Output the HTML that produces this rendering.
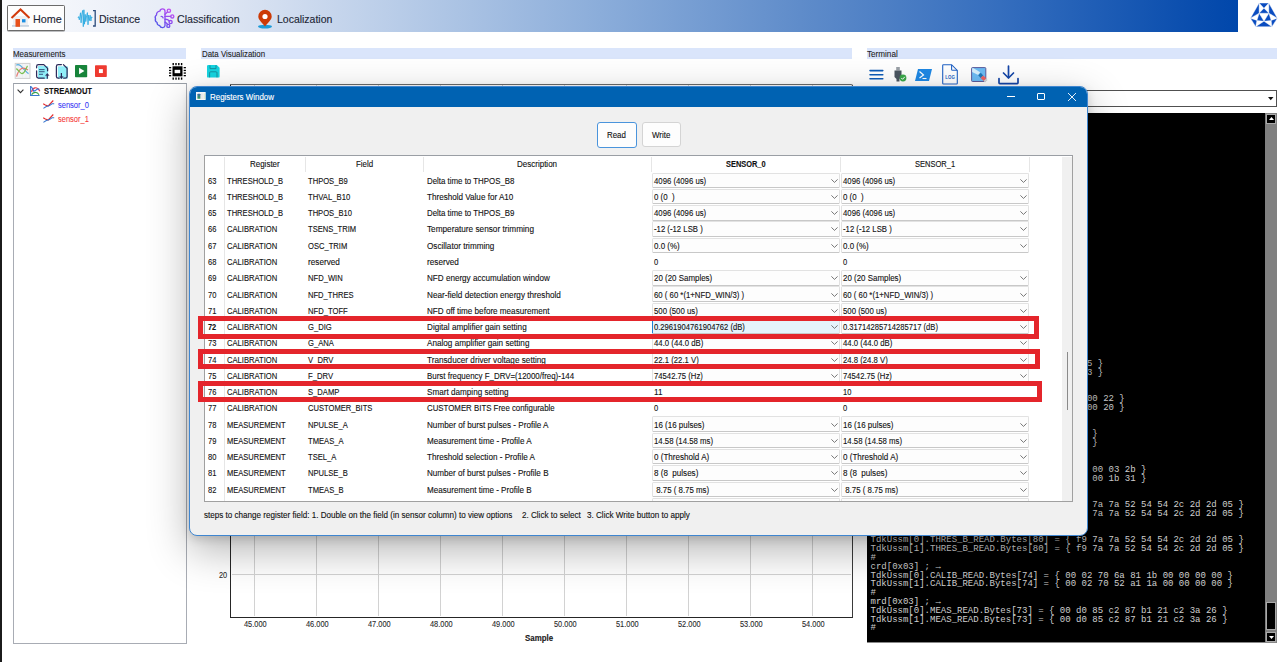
<!DOCTYPE html><html><head><meta charset="utf-8"><title>Registers Window</title><style>
*{margin:0;padding:0;box-sizing:border-box}
html,body{width:1280px;height:662px;overflow:hidden;background:#fff;font-family:"Liberation Sans",sans-serif;color:#1a1a1a}
.ab{position:absolute}
.t{position:absolute;white-space:pre;line-height:1}
svg{position:absolute;overflow:visible}
</style></head><body>
<div class="ab" style="left:0;top:0;width:1238px;height:32px;background:linear-gradient(90deg,#fbfcfe 0px,#e3e9f5 200px,#b8cce8 400px,#8badda 600px,#5f8cca 800px,#356ebe 1000px,#084cad 1200px,#0047ab 1238px)"></div>
<svg style="left:1246px;top:0px" width="34" height="30" viewBox="0 0 750 662">
<g fill="#0a4cc0" stroke="#fff" stroke-width="9" stroke-linejoin="round">
<polygon points="290,68 502,68 396,180"/>
<polygon points="396,180 290,292 505,292"/>
<polygon points="290,68 98,400 290,292"/>
<polygon points="502,68 692,400 505,292"/>
<polygon points="290,292 397,468 240,450"/>
<polygon points="505,292 397,468 556,450"/>
<polygon points="98,400 240,450 214,588"/>
<polygon points="692,400 556,450 572,588"/>
<polygon points="397,468 214,588 572,588"/>
</g></svg>
<div class="ab" style="left:7.3px;top:5px;width:57.4px;height:26.4px;border:1.3px solid #6b6b6b;border-radius:1.5px;background:#fdfdfd;box-shadow:0 0.6px 0 #888"></div>
<svg style="left:10px;top:8px" width="21" height="20" viewBox="0 0 21 20">
<rect x="3" y="8" width="15" height="10.5" fill="#eef0f3"/>
<rect x="2" y="17" width="17" height="1.8" fill="#c9d5e2"/>
<polyline points="1.5,10 10.5,1.5 19.5,10" fill="none" stroke="#d23a0c" stroke-width="2"/>
<rect x="5.5" y="11" width="4.5" height="7.8" fill="#e8501a"/>
<rect x="12" y="11.2" width="3.5" height="3.2" fill="#1b8fe3"/>
</svg>
<div class="t" style="left:33.00px;top:14.13px;font-size:10.6px;color:#1c2636;transform:scaleX(1.0165);transform-origin:0 0;-webkit-text-stroke:0.12px #1c2636;">Home</div>
<svg style="left:0;top:0" width="1" height="1">
<polyline points="78,18 78.7,16.6 79.3,19.8 79.9,16.8 80.5,12.8 81.1,22.8 81.7,14.8 82.7,10.4 83.3,26.7 83.9,9.8 84.5,24.2 85.2,14.4 85.8,21.6 86.6,15.8 87.4,12.6 88,24.8 88.7,15 89.4,20.6 90.2,15.2 90.9,21 91.6,16.8 92.2,18" fill="none" stroke="#28a9e0" stroke-width="0.85" stroke-linejoin="round"/>
<polyline points="93,10.6 95.2,10.6 95.2,26 93,26" fill="none" stroke="#2c4c7c" stroke-width="1.3"/>
</svg>
<div class="t" style="left:99.40px;top:13.93px;font-size:10.6px;color:#1c2636;transform:scaleX(0.9965);transform-origin:0 0;-webkit-text-stroke:0.12px #1c2636;">Distance</div>
<svg style="left:152px;top:6px" width="26" height="26" viewBox="0 0 26 26">
<defs><linearGradient id="bg1" gradientUnits="userSpaceOnUse" x1="4" y1="22" x2="20" y2="4"><stop offset="0" stop-color="#3d55e6"/><stop offset="0.55" stop-color="#8a4cf0"/><stop offset="1" stop-color="#c94ef2"/></linearGradient></defs>
<g fill="none" stroke="url(#bg1)" stroke-width="1.35" stroke-linecap="round" stroke-linejoin="round">
<path d="M13,19.6 V5.2 C13,3.6 11.9,2.9 10.6,2.9 C9.1,2.9 8.1,3.8 7.9,5.1 C5.7,5.3 4.3,7 4.5,9 C3.3,9.8 2.9,11.4 3.5,12.8 C3,14.4 3.7,15.9 5.1,16.5 C5,18.2 6.1,19.5 7.6,19.5 C8.1,20.9 9.4,21.7 10.9,21.6 C12.3,21.4 13,20.6 13,19.6"/>
<path d="M9.2,10.4 C10.2,10.4 10.9,11 11.1,11.8"/>
<path d="M13,8.3 L15.2,6.3"/><path d="M13,10.4 H18.7"/><path d="M13,13.3 C15,13.2 16.5,14 17.3,15"/><path d="M13,16.2 C14.2,16.8 15.2,17.6 15.7,18.6"/>
<circle cx="16.9" cy="4.7" r="1.65"/><circle cx="20.3" cy="10.4" r="1.55"/><circle cx="18.6" cy="16" r="1.55"/><circle cx="16.3" cy="19.9" r="1.5"/>
</g>
</svg>
<div class="t" style="left:176.70px;top:14.03px;font-size:10.6px;color:#1c2636;transform:scaleX(1.0041);transform-origin:0 0;-webkit-text-stroke:0.12px #1c2636;">Classification</div>
<svg style="left:256.6px;top:9.5px" width="16" height="19" viewBox="0 0 16 19">
<ellipse cx="8" cy="16.6" rx="7" ry="1.9" fill="#1d9bd8"/>
<path d="M8,16.4 C5,12.5 1.3,9.8 1.3,6.5 A6.7,6.7 0 0 1 14.7,6.5 C14.7,9.8 11,12.5 8,16.4 Z" fill="#cc3a06"/>
<circle cx="8" cy="6.5" r="2.6" fill="#fff"/>
</svg>
<div class="t" style="left:276.90px;top:14.03px;font-size:10.6px;color:#1c2636;transform:scaleX(0.9885);transform-origin:0 0;-webkit-text-stroke:0.12px #1c2636;">Localization</div>
<div class="ab" style="left:12.7px;top:48px;width:173.3px;height:10.8px;background:#dae5fb"></div>
<div class="t" style="left:13.10px;top:49.62px;font-size:8.6px;color:#1e1e1e;transform:scaleX(0.9208);transform-origin:0 0;-webkit-text-stroke:0.1px #1e1e1e;">Measurements</div>
<div class="ab" style="left:201.3px;top:48px;width:651px;height:10.8px;background:#dae5fb"></div>
<div class="t" style="left:201.70px;top:49.62px;font-size:8.6px;color:#1e1e1e;transform:scaleX(0.9194);transform-origin:0 0;-webkit-text-stroke:0.1px #1e1e1e;">Data Visualization</div>
<div class="ab" style="left:866.6px;top:48px;width:410.4px;height:10.8px;background:#dae5fb"></div>
<div class="t" style="left:867.00px;top:49.62px;font-size:8.6px;color:#1e1e1e;transform:scaleX(0.9455);transform-origin:0 0;-webkit-text-stroke:0.1px #1e1e1e;">Terminal</div>
<svg style="left:12px;top:60px" width="60" height="22" viewBox="0 0 60 22">
<rect x="3.2" y="3.4" width="14.8" height="15" fill="#f3f4f5" stroke="#cfcfcf" stroke-width="1"/>
<g stroke="#e6eaef" stroke-width="0.5"><line x1="7" y1="4" x2="7" y2="18"/><line x1="10.5" y1="4" x2="10.5" y2="18"/><line x1="14" y1="4" x2="14" y2="18"/></g>
<path d="M4.3,5.3 C6,4 8,4.5 11,8.3 C13.5,11 15,13 16.6,13.6" fill="none" stroke="#5aaee0" stroke-width="1.2"/>
<path d="M4.6,16.6 C5.5,13 7,10 9.6,8.5 C11.5,7.8 13.5,8.2 16,10" fill="none" stroke="#e47a72" stroke-width="1.2"/>
<path d="M4.3,8.6 C6,9.5 7,12 9.5,13.5 C11.5,14 12.5,12 13.5,10 C14.5,8 15,6.5 15.6,6" fill="none" stroke="#7cc052" stroke-width="1.2"/>
<rect x="26" y="6" width="10" height="12.6" fill="#90eef8"/>
<rect x="26.6" y="6.3" width="9.6" height="12.4" fill="#90eef8"/>
<g fill="none" stroke="#2e2c5a" stroke-width="1.25" stroke-linecap="round" stroke-linejoin="round">
<path d="M4.6,7.8 V6.5 Q4.6,4.6 6.5,4.6 H11.6 L15.6,8.6 V10.6" transform="translate(28,0)" opacity="0"/>
</g>
</svg>
<svg style="left:32px;top:60px" width="40" height="22" viewBox="0 0 40 22">
<rect x="6" y="6" width="10" height="12.6" fill="#90eef8"/>
<rect x="25.9" y="6.3" width="10" height="12.3" fill="#90eef8"/>
<g fill="none" stroke="#2e2c5a" stroke-width="1.25" stroke-linecap="round" stroke-linejoin="round">
<path d="M4.6,7.8 V6.4 Q4.6,4.6 6.4,4.6 H11.8 L15.6,8.4 V10.8"/>
<path d="M4.6,10.8 V16.3 Q4.6,18 6.4,18 H12.3"/>
<path d="M29.4,4.6 H26.2 Q24.4,4.6 24.4,6.4 V16.4 Q24.4,18.1 26.2,18.1 H27.3"/>
<path d="M31.4,4.6 L35.1,8.3 V16.4 Q35.1,18.1 33.3,18.1 H31.6"/>
</g>
<g stroke="#3b5f86" stroke-width="1.1"><line x1="7" y1="9.6" x2="12.6" y2="9.6"/><line x1="7" y1="11.7" x2="12.6" y2="11.7"/><line x1="7" y1="14.3" x2="11" y2="14.3"/></g>
<g fill="#2e2c5a" stroke="#2e2c5a">
<line x1="15.3" y1="14.5" x2="15.3" y2="18.8" stroke-width="1.2"/><polygon points="13.4,15.6 15.3,13.3 17.2,15.6" stroke-width="0.3"/>
<line x1="29.4" y1="13" x2="29.4" y2="17.2" stroke-width="1.2"/><polygon points="27.5,16.6 31.3,16.6 29.4,18.9" stroke-width="0.3"/>
</g>
</svg>
<svg style="left:75.4px;top:65px" width="12.2" height="12.2" viewBox="0 0 12 12">
<rect x="0" y="0" width="12" height="12" rx="0.8" fill="#17843a"/>
<polygon points="4,2.8 9.3,6 4,9.2" fill="#fff"/>
</svg>
<svg style="left:95.2px;top:65px" width="11.8" height="12.2" viewBox="0 0 12 12">
<rect x="0" y="0" width="12" height="12" rx="0.8" fill="#ee3a30"/>
<rect x="4" y="4" width="4" height="4" fill="#fff"/>
</svg>
<svg style="left:168.5px;top:62.8px" width="17" height="17" viewBox="0 0 17 17">
<rect x="3.5" y="3.3" width="10" height="10" fill="#000"/>
<rect x="5.6" y="6.8" width="5.6" height="3.4" fill="#fff"/>
<g fill="#000">
<rect x="3.5" y="0" width="1.4" height="2.2"/><rect x="6.3" y="0" width="1.4" height="2.2"/><rect x="9.1" y="0" width="1.4" height="2.2"/><rect x="11.9" y="0" width="1.4" height="2.2"/>
<rect x="3.5" y="14.5" width="1.4" height="2.2"/><rect x="6.3" y="14.5" width="1.4" height="2.2"/><rect x="9.1" y="14.5" width="1.4" height="2.2"/><rect x="11.9" y="14.5" width="1.4" height="2.2"/>
<rect x="0" y="4" width="2.2" height="1.3"/><rect x="0" y="6.8" width="2.2" height="1.3"/><rect x="0" y="9.4" width="2.2" height="1.3"/><rect x="0" y="12" width="2.2" height="1.3"/>
<rect x="14.7" y="4" width="2.2" height="1.3"/><rect x="14.7" y="6.8" width="2.2" height="1.3"/><rect x="14.7" y="9.4" width="2.2" height="1.3"/><rect x="14.7" y="12" width="2.2" height="1.3"/>
</g></svg>
<svg style="left:207.3px;top:65px" width="12.6" height="12.6" viewBox="0 0 12.6 12.6">
<path d="M1.2,0 H9.8 L12.6,2.8 V11.4 A1.2,1.2 0 0 1 11.4,12.6 H1.2 A1.2,1.2 0 0 1 0,11.4 V1.2 A1.2,1.2 0 0 1 1.2,0 Z" fill="#15d4e0"/>
<path d="M3,0.3 V3.6 H9 V0.3" fill="none" stroke="#158a9a" stroke-width="0.9"/>
<path d="M2.6,12.4 V7.8 A1,1 0 0 1 3.6,6.8 H9 A1,1 0 0 1 10,7.8 V12.4" fill="none" stroke="#158a9a" stroke-width="0.9"/>
</svg>
<div class="ab" style="left:13.2px;top:83.4px;width:173.6px;height:560.2px;border:1px solid #a8acb4;border-top-color:#9aa0a8;background:#fff"></div>
<svg style="left:16.8px;top:88.5px" width="7" height="4.5" viewBox="0 0 7 4.5"><polyline points="0.6,0.6 3.5,3.6 6.4,0.6" fill="none" stroke="#333" stroke-width="1.1"/></svg>
<svg style="left:29.7px;top:86px" width="11" height="10.5" viewBox="0 0 11 10.5">
<path d="M0.6,0 V9.5 H9.6" fill="none" stroke="#3a78cc" stroke-width="1.1"/>
<path d="M0.6,0.3 L2.8,2.7" stroke="#3a78cc" stroke-width="1.1"/>
<path d="M1.5,5.8 C2.6,1.8 6.6,-0.6 9.9,5.2" fill="none" stroke="#e8404a" stroke-width="1.2"/>
<path d="M2.2,2.3 L3.8,5.2 L5.7,4.15 L7.9,2.8 L9.3,3.3" fill="none" stroke="#2f6ee0" stroke-width="1.1"/>
<path d="M1.6,8.8 C3,6.2 7,5 9,8.8" fill="none" stroke="#3aa04a" stroke-width="1.1"/>
</svg>
<div class="t" style="left:44.10px;top:86.97px;font-size:8.9px;font-weight:bold;color:#111;transform:scaleX(0.8539);transform-origin:0 0;-webkit-text-stroke:0.12px #111;">STREAMOUT</div>
<svg style="left:42.7px;top:99.7px" width="11.5" height="9" viewBox="0 0 11.5 9">
<polyline points="0.2,3.7 2.3,4.9 5.1,6.1 7.5,3.3 10.3,0.5" fill="none" stroke="#e62828" stroke-width="1.1"/>
<polyline points="0.4,8.4 3.3,6.5 6.5,5.6 8.9,3.7 11.2,3.7" fill="none" stroke="#3a78d0" stroke-width="1.1"/>
</svg>
<div class="t" style="left:57.70px;top:100.65px;font-size:8.8px;color:#3838f5;transform:scaleX(0.8535);transform-origin:0 0;-webkit-text-stroke:0.08px #3838f5;">sensor_0</div>
<svg style="left:42.7px;top:113.60000000000001px" width="11.5" height="9" viewBox="0 0 11.5 9">
<polyline points="0.2,3.7 2.3,4.9 5.1,6.1 7.5,3.3 10.3,0.5" fill="none" stroke="#e62828" stroke-width="1.1"/>
<polyline points="0.4,8.4 3.3,6.5 6.5,5.6 8.9,3.7 11.2,3.7" fill="none" stroke="#3a78d0" stroke-width="1.1"/>
</svg>
<div class="t" style="left:57.70px;top:114.55px;font-size:8.8px;color:#f53838;transform:scaleX(0.8535);transform-origin:0 0;-webkit-text-stroke:0.08px #f53838;">sensor_1</div>
<div class="ab" style="left:230.4px;top:83.6px;width:622.2px;height:534px;border-left:1.7px solid #262626;border-bottom:1.7px solid #262626;border-top:1.6px solid #6c6c6c;border-right:1.4px solid #3a3a3a;border-top-right-radius:2px;background:#fff"></div>
<div class="ab" style="left:254.40px;top:85px;width:1px;height:531px;background:#d2d2d2"></div>
<div class="t" style="left:243.56px;top:620.02px;font-size:8.6px;color:#2a2a2a;transform:scaleX(0.8624);transform-origin:0 0;-webkit-text-stroke:0.1px #2a2a2a;">45.000</div>
<div class="ab" style="left:316.40px;top:85px;width:1px;height:531px;background:#d2d2d2"></div>
<div class="t" style="left:305.56px;top:620.02px;font-size:8.6px;color:#2a2a2a;transform:scaleX(0.8624);transform-origin:0 0;-webkit-text-stroke:0.1px #2a2a2a;">46.000</div>
<div class="ab" style="left:378.40px;top:85px;width:1px;height:531px;background:#d2d2d2"></div>
<div class="t" style="left:367.56px;top:620.02px;font-size:8.6px;color:#2a2a2a;transform:scaleX(0.8624);transform-origin:0 0;-webkit-text-stroke:0.1px #2a2a2a;">47.000</div>
<div class="ab" style="left:440.40px;top:85px;width:1px;height:531px;background:#d2d2d2"></div>
<div class="t" style="left:429.56px;top:620.02px;font-size:8.6px;color:#2a2a2a;transform:scaleX(0.8624);transform-origin:0 0;-webkit-text-stroke:0.1px #2a2a2a;">48.000</div>
<div class="ab" style="left:502.40px;top:85px;width:1px;height:531px;background:#d2d2d2"></div>
<div class="t" style="left:491.56px;top:620.02px;font-size:8.6px;color:#2a2a2a;transform:scaleX(0.8624);transform-origin:0 0;-webkit-text-stroke:0.1px #2a2a2a;">49.000</div>
<div class="ab" style="left:564.40px;top:85px;width:1px;height:531px;background:#d2d2d2"></div>
<div class="t" style="left:553.56px;top:620.02px;font-size:8.6px;color:#2a2a2a;transform:scaleX(0.8624);transform-origin:0 0;-webkit-text-stroke:0.1px #2a2a2a;">50.000</div>
<div class="ab" style="left:626.40px;top:85px;width:1px;height:531px;background:#d2d2d2"></div>
<div class="t" style="left:615.56px;top:620.02px;font-size:8.6px;color:#2a2a2a;transform:scaleX(0.8624);transform-origin:0 0;-webkit-text-stroke:0.1px #2a2a2a;">51.000</div>
<div class="ab" style="left:688.40px;top:85px;width:1px;height:531px;background:#d2d2d2"></div>
<div class="t" style="left:677.56px;top:620.02px;font-size:8.6px;color:#2a2a2a;transform:scaleX(0.8624);transform-origin:0 0;-webkit-text-stroke:0.1px #2a2a2a;">52.000</div>
<div class="ab" style="left:750.40px;top:85px;width:1px;height:531px;background:#d2d2d2"></div>
<div class="t" style="left:739.56px;top:620.02px;font-size:8.6px;color:#2a2a2a;transform:scaleX(0.8624);transform-origin:0 0;-webkit-text-stroke:0.1px #2a2a2a;">53.000</div>
<div class="ab" style="left:812.40px;top:85px;width:1px;height:531px;background:#d2d2d2"></div>
<div class="t" style="left:801.56px;top:620.02px;font-size:8.6px;color:#2a2a2a;transform:scaleX(0.8624);transform-origin:0 0;-webkit-text-stroke:0.1px #2a2a2a;">54.000</div>
<div class="ab" style="left:232px;top:574.2px;width:619px;height:1px;background:#d2d2d2"></div>
<div class="t" style="left:219.42px;top:570.52px;font-size:8.6px;color:#2a2a2a;transform:scaleX(0.8556);transform-origin:0 0;-webkit-text-stroke:0.1px #2a2a2a;">20</div>
<div class="ab" style="left:232px;top:530.5px;width:619px;height:1px;background:#d2d2d2"></div>
<div class="t" style="left:219.42px;top:526.82px;font-size:8.6px;color:#2a2a2a;transform:scaleX(0.8556);transform-origin:0 0;-webkit-text-stroke:0.1px #2a2a2a;">30</div>
<div class="ab" style="left:232px;top:486.5px;width:619px;height:1px;background:#d2d2d2"></div>
<div class="t" style="left:219.42px;top:482.82px;font-size:8.6px;color:#2a2a2a;transform:scaleX(0.8556);transform-origin:0 0;-webkit-text-stroke:0.1px #2a2a2a;">40</div>
<div class="t" style="left:524.74px;top:634.15px;font-size:8.8px;font-weight:bold;color:#1a1a1a;transform:scaleX(0.8986);transform-origin:0 0;-webkit-text-stroke:0.12px #1a1a1a;">Sample</div>
<svg style="left:869px;top:69px" width="15" height="11" viewBox="0 0 15 11">
<g stroke="#0e5cb8" stroke-width="1.55" stroke-linecap="round"><line x1="1" y1="1.6" x2="13.8" y2="1.6"/><line x1="1" y1="5.7" x2="13.8" y2="5.7"/><line x1="1" y1="9.7" x2="13.8" y2="9.7"/></g></svg>
<svg style="left:893px;top:67px" width="14" height="15" viewBox="0 0 14 15">
<rect x="3.2" y="0" width="3.6" height="3.5" fill="#9aa0a6"/>
<path d="M1.5,3.5 H8.5 V10 L6.5,12 V14.5 H3.5 V12 L1.5,10 Z" fill="#4a5560"/>
<circle cx="10" cy="11" r="3.4" fill="#3aa84a"/>
<polyline points="8.3,11 9.6,12.3 11.8,9.8" fill="none" stroke="#fff" stroke-width="1"/>
</svg>
<svg style="left:915px;top:68.6px" width="17" height="12" viewBox="0 0 17 12">
<polygon points="3,0 17,0 14,12 0,12" fill="#1e88e5"/>
<polyline points="4.5,2.5 8.5,6 4.5,9" fill="none" stroke="#fff" stroke-width="1.2"/>
<line x1="7.5" y1="9.5" x2="11.5" y2="9.5" stroke="#fff" stroke-width="1.1"/>
</svg>
<svg style="left:942px;top:64px" width="17" height="21" viewBox="0 0 17 21">
<path d="M1.4,0.7 H9.6 L15.3,6.4 V19.3 Q15.3,20 14.6,20 H1.4 Q0.7,20 0.7,19.3 V1.4 Q0.7,0.7 1.4,0.7 Z" fill="#fff" stroke="#2263c6" stroke-width="1.1"/>
<path d="M9.6,0.9 V5.4 Q9.6,6.3 10.5,6.3 H15.1" fill="none" stroke="#2263c6" stroke-width="1.1"/>
<text x="8.1" y="14.6" font-size="5.6" font-family="Liberation Sans" font-weight="bold" text-anchor="middle" fill="#2263c6" transform="translate(8.1,0) scale(0.78,1) translate(-8.1,0)">LOG</text>
</svg>
<svg style="left:971px;top:66.6px" width="18" height="17" viewBox="0 0 18 17">
<rect x="0.6" y="0.6" width="14.2" height="13.9" rx="0.9" fill="#6cbcf5" stroke="#5c5c9c" stroke-width="1"/>
<polygon points="1.1,1.2 2.6,1.2 9.2,5.2 7.2,8 1.1,4.9" fill="#d6effc"/>
<polygon points="7.2,8.2 9.8,5.8 12.2,8.4 9.6,10.9" fill="#1f78b8"/>
<polygon points="9.6,10.9 12.2,8.4 15.3,11.5 12.7,14.1" fill="#f06262"/>
<polygon points="12.7,14.1 15.3,11.5 16.6,12.9 14,15.5" fill="#d8d8d8"/>
</svg>
<svg style="left:998px;top:64.6px" width="21" height="19.5" viewBox="0 0 21 19.5">
<g fill="none" stroke="#1546a8" stroke-width="1.7" stroke-linecap="round" stroke-linejoin="round">
<line x1="10.5" y1="1" x2="10.5" y2="12.5"/><polyline points="5.5,8 10.5,13 15.5,8"/>
<path d="M1,13.5 V17.8 A0.8,0.8 0 0 0 1.8,18.6 H19.2 A0.8,0.8 0 0 0 20,17.8 V13.5"/></g></svg>
<div class="ab" style="left:866px;top:89.7px;width:410.5px;height:17.2px;border:1.2px solid #505050;border-right-width:1.4px;border-bottom-width:1.5px;background:#fff"></div>
<svg style="left:1267.5px;top:97.4px" width="5.5" height="3.2" viewBox="0 0 5.5 3.2"><polygon points="0,0 5.5,0 2.75,3.2" fill="#111"/></svg>
<div class="ab" style="left:867.2px;top:112.7px;width:410px;height:530.8px;background:#000;border-right:1px solid #777;border-bottom:1px solid #888"></div>
<div class="ab" style="left:1265px;top:113px;width:12px;height:529px;background:#808080"></div>
<div class="ab" style="left:1266px;top:113.5px;width:10.3px;height:10px;background:#000;border:1px solid #aaa"></div>
<svg style="left:1268.6px;top:116.5px" width="5" height="3" viewBox="0 0 5 3"><polygon points="0,3 5,3 2.5,0" fill="#fff"/></svg>
<div class="ab" style="left:1266px;top:601.7px;width:9.8px;height:28.2px;background:#000;border:1px solid #aaa"></div>
<div class="ab" style="left:1266px;top:632px;width:10.3px;height:10.3px;background:#000;border:1px solid #aaa"></div>
<svg style="left:1268.6px;top:636px" width="5" height="3" viewBox="0 0 5 3"><polygon points="0,0 5,0 2.5,3" fill="#fff"/></svg>
<div style="position:absolute;left:867.2px;top:112.7px;width:397.8px;height:530px;overflow:hidden">
<div class="t" style="left:3.3px;top:510.80px;font-family:'Liberation Mono', monospace;font-size:9.03px;color:#cfcfcf">#</div>
<div class="t" style="left:3.3px;top:501.98px;font-family:'Liberation Mono', monospace;font-size:9.03px;color:#cfcfcf">TdkUssm[1].MEAS_READ.Bytes[73] = { 00 d0 85 c2 87 b1 21 c2 3a 26 }</div>
<div class="t" style="left:3.3px;top:493.16px;font-family:'Liberation Mono', monospace;font-size:9.03px;color:#cfcfcf">TdkUssm[0].MEAS_READ.Bytes[73] = { 00 d0 85 c2 87 b1 21 c2 3a 26 }</div>
<div class="t" style="left:3.3px;top:484.34px;font-family:'Liberation Mono', monospace;font-size:9.03px;color:#cfcfcf">mrd[0x03] ; →</div>
<div class="t" style="left:3.3px;top:475.52px;font-family:'Liberation Mono', monospace;font-size:9.03px;color:#cfcfcf">#</div>
<div class="t" style="left:3.3px;top:466.70px;font-family:'Liberation Mono', monospace;font-size:9.03px;color:#cfcfcf">TdkUssm[1].CALIB_READ.Bytes[74] = { 00 02 70 52 a1 1a 00 00 00 00 }</div>
<div class="t" style="left:3.3px;top:457.88px;font-family:'Liberation Mono', monospace;font-size:9.03px;color:#cfcfcf">TdkUssm[0].CALIB_READ.Bytes[74] = { 00 02 70 6a 81 1b 00 00 00 00 }</div>
<div class="t" style="left:3.3px;top:449.06px;font-family:'Liberation Mono', monospace;font-size:9.03px;color:#cfcfcf">crd[0x03] ; →</div>
<div class="t" style="left:3.3px;top:440.24px;font-family:'Liberation Mono', monospace;font-size:9.03px;color:#cfcfcf">#</div>
<div class="t" style="left:3.3px;top:431.42px;font-family:'Liberation Mono', monospace;font-size:9.03px;color:#cfcfcf">TdkUssm[1].THRES_B_READ.Bytes[80] = { f9 7a 7a 52 54 54 2c 2d 2d 05 }</div>
<div class="t" style="left:3.3px;top:422.60px;font-family:'Liberation Mono', monospace;font-size:9.03px;color:#cfcfcf">TdkUssm[0].THRES_B_READ.Bytes[80] = { f9 7a 7a 52 54 54 2c 2d 2d 05 }</div>
<div class="t" style="left:3.3px;top:413.78px;font-family:'Liberation Mono', monospace;font-size:9.03px;color:#cfcfcf">#</div>
<div class="t" style="left:3.3px;top:404.96px;font-family:'Liberation Mono', monospace;font-size:9.03px;color:#cfcfcf">tbrd[0x03] ; →</div>
<div class="t" style="left:3.3px;top:396.14px;font-family:'Liberation Mono', monospace;font-size:9.03px;color:#cfcfcf">TdkUssm[1].THRES_A_READ.Bytes[80] = { f9 7a 7a 52 54 54 2c 2d 2d 05 }</div>
<div class="t" style="left:3.3px;top:387.32px;font-family:'Liberation Mono', monospace;font-size:9.03px;color:#cfcfcf">TdkUssm[0].THRES_A_READ.Bytes[80] = { f9 7a 7a 52 54 54 2c 2d 2d 05 }</div>
<div class="t" style="left:3.3px;top:378.50px;font-family:'Liberation Mono', monospace;font-size:9.03px;color:#cfcfcf">#</div>
<div class="t" style="left:3.3px;top:369.68px;font-family:'Liberation Mono', monospace;font-size:9.03px;color:#cfcfcf">tard[0x03] ; →</div>
<div class="t" style="left:3.3px;top:360.86px;font-family:'Liberation Mono', monospace;font-size:9.03px;color:#cfcfcf">TdkUssm[1].TCAL_READ.Bytes[14] = { 00 00 00 1b 31 }</div>
<div class="t" style="left:3.3px;top:352.04px;font-family:'Liberation Mono', monospace;font-size:9.03px;color:#cfcfcf">TdkUssm[0].TCAL_READ.Bytes[14] = { 00 00 00 03 2b }</div>
<div class="t" style="left:3.3px;top:343.22px;font-family:'Liberation Mono', monospace;font-size:9.03px;color:#cfcfcf">#</div>
<div class="t" style="left:3.3px;top:334.40px;font-family:'Liberation Mono', monospace;font-size:9.03px;color:#cfcfcf">tcrd[0x03] ; →</div>
<div class="t" style="left:3.3px;top:325.58px;font-family:'Liberation Mono', monospace;font-size:9.03px;color:#cfcfcf">TdkUssm[1].SETTINGS_READ.Bytes[1] = { 00 }</div>
<div class="t" style="left:3.3px;top:316.76px;font-family:'Liberation Mono', monospace;font-size:9.03px;color:#cfcfcf">TdkUssm[0].SETTINGS_READ.Bytes[1] = { 00 }</div>
<div class="t" style="left:3.3px;top:307.94px;font-family:'Liberation Mono', monospace;font-size:9.03px;color:#cfcfcf">#</div>
<div class="t" style="left:3.3px;top:299.12px;font-family:'Liberation Mono', monospace;font-size:9.03px;color:#cfcfcf">srd[0x03] ; →</div>
<div class="t" style="left:3.3px;top:290.30px;font-family:'Liberation Mono', monospace;font-size:9.03px;color:#cfcfcf">TdkUssm[1].DIAG_READ.Bytes[5] = { 00 00 00 20 }</div>
<div class="t" style="left:3.3px;top:281.48px;font-family:'Liberation Mono', monospace;font-size:9.03px;color:#cfcfcf">TdkUssm[0].DIAG_READ.Bytes[5] = { 00 00 00 22 }</div>
<div class="t" style="left:3.3px;top:272.66px;font-family:'Liberation Mono', monospace;font-size:9.03px;color:#cfcfcf">#</div>
<div class="t" style="left:3.3px;top:263.84px;font-family:'Liberation Mono', monospace;font-size:9.03px;color:#cfcfcf">drd[0x03] ; →</div>
<div class="t" style="left:3.3px;top:255.02px;font-family:'Liberation Mono', monospace;font-size:9.03px;color:#cfcfcf">TdkUssm[1].PSTATUS_READ.Bytes[112] = { 03 }</div>
<div class="t" style="left:3.3px;top:246.20px;font-family:'Liberation Mono', monospace;font-size:9.03px;color:#cfcfcf">TdkUssm[0].PSTATUS_READ.Bytes[112] = { 05 }</div>
<div class="t" style="left:3.3px;top:237.38px;font-family:'Liberation Mono', monospace;font-size:9.03px;color:#cfcfcf">#</div>
<div class="t" style="left:3.3px;top:228.56px;font-family:'Liberation Mono', monospace;font-size:9.03px;color:#cfcfcf">strd[0x03] ; →</div>
</div>
<div class="ab" style="left:189.0px;top:86.0px;width:898.8px;height:450.0px;border-radius:8px;background:#f0f0f0;border:1px solid #3f86d0;box-shadow:0 14px 42px rgba(0,0,0,0.30),0 3px 10px rgba(0,0,0,0.14);overflow:hidden"><div class="ab" style="left:0;top:0;width:100%;height:19.9px;background:#0062b2"></div></div>
<svg style="left:195.5px;top:92.2px" width="9.7" height="8" viewBox="0 0 9.7 8">
<defs><linearGradient id="tg1" x1="0" y1="0" x2="0" y2="1"><stop offset="0" stop-color="#3d6aa8"/><stop offset="1" stop-color="#35a055"/></linearGradient>
<linearGradient id="tg2" x1="0" y1="0" x2="1" y2="0"><stop offset="0" stop-color="#e4e4e4"/><stop offset="0.7" stop-color="#eeeeee"/><stop offset="1" stop-color="#d8eab0"/></linearGradient></defs>
<rect x="0" y="0" width="9.7" height="8" fill="#f4f6f8"/>
<rect x="4.8" y="1.4" width="4.3" height="5.6" fill="url(#tg2)"/>
<rect x="1.4" y="1.8" width="3" height="5" rx="0.4" fill="url(#tg1)"/>
</svg>
<div class="t" style="left:209.70px;top:92.77px;font-size:8.9px;color:#fff;transform:scaleX(0.8950);transform-origin:0 0;-webkit-text-stroke:0.12px #fff;">Registers Window</div>
<div class="ab" style="left:1006.6px;top:96.2px;width:8px;height:0.9px;background:#fff"></div>
<div class="ab" style="left:1037px;top:92.8px;width:7.6px;height:7.6px;border:1px solid #fff;border-radius:1px"></div>
<svg style="left:1067.7px;top:92.7px" width="8" height="8" viewBox="0 0 8 8"><g stroke="#fff" stroke-width="0.9"><line x1="0" y1="0" x2="8" y2="8"/><line x1="8" y1="0" x2="0" y2="8"/></g></svg>
<div class="ab" style="left:597px;top:122px;width:39.7px;height:25.8px;border:1.5px solid #4a94dc;border-radius:3px;background:#fdfdfd"></div>
<div class="t" style="left:607.40px;top:130.95px;font-size:8.8px;color:#111;transform:scaleX(0.8981);transform-origin:0 0;-webkit-text-stroke:0.12px #111;">Read</div>
<div class="ab" style="left:642.2px;top:122.4px;width:38.4px;height:25px;border:1px solid #d4d4d4;border-radius:3px;background:#fdfdfd"></div>
<div class="t" style="left:652.26px;top:130.95px;font-size:8.8px;color:#111;transform:scaleX(0.8975);transform-origin:0 0;-webkit-text-stroke:0.12px #111;">Write</div>
<div class="ab" style="left:204.0px;top:155.3px;width:869.0px;height:346.4px;background:#fff;border:1px solid #a0a0a0;border-top:1.5px solid #9a9ea4"></div>
<div class="ab" style="left:1062px;top:156.8px;width:10px;height:343.9px;background:#f0f0f0"></div>
<div class="ab" style="left:1066.6px;top:352px;width:1px;height:58px;background:#8a8a8a"></div>
<div class="ab" style="left:223.6px;top:156.8px;width:1px;height:15.5px;background:#e6e6e6"></div>
<div class="ab" style="left:304.9px;top:156.8px;width:1px;height:15.5px;background:#e6e6e6"></div>
<div class="ab" style="left:423.2px;top:156.8px;width:1px;height:15.5px;background:#e6e6e6"></div>
<div class="ab" style="left:650.8px;top:156.8px;width:1px;height:15.5px;background:#e6e6e6"></div>
<div class="ab" style="left:839.8px;top:156.8px;width:1px;height:15.5px;background:#e6e6e6"></div>
<div class="ab" style="left:1028.8px;top:156.8px;width:1px;height:15.5px;background:#e6e6e6"></div>
<div class="ab" style="left:223.6px;top:156.8px;width:1px;height:343.9px;background:#e6e6e6"></div>
<div class="t" style="left:249.90px;top:160.35px;font-size:8.8px;color:#111;transform:scaleX(0.9061);transform-origin:0 0;-webkit-text-stroke:0.12px #111;">Register</div>
<div class="t" style="left:355.97px;top:160.35px;font-size:8.8px;color:#111;transform:scaleX(0.8996);transform-origin:0 0;-webkit-text-stroke:0.12px #111;">Field</div>
<div class="t" style="left:517.48px;top:160.35px;font-size:8.8px;color:#111;transform:scaleX(0.9098);transform-origin:0 0;-webkit-text-stroke:0.12px #111;">Description</div>
<div class="t" style="left:725.98px;top:160.35px;font-size:8.8px;font-weight:bold;color:#111;transform:scaleX(0.8441);transform-origin:0 0;-webkit-text-stroke:0.12px #111;">SENSOR_0</div>
<div class="t" style="left:914.74px;top:160.35px;font-size:8.8px;color:#111;transform:scaleX(0.8543);transform-origin:0 0;-webkit-text-stroke:0.12px #111;">SENSOR_1</div>
<div style="position:absolute;left:205.0px;top:156.8px;width:857.0px;height:343.9px;overflow:hidden">
<div class="t" style="left:2.70px;top:19.91px;font-size:9.2px;color:#111;transform:scaleX(0.8198);transform-origin:0 0;-webkit-text-stroke:0.12px #111;">63</div>
<div class="t" style="left:21.60px;top:19.91px;font-size:9.2px;color:#111;transform:scaleX(0.8252);transform-origin:0 0;-webkit-text-stroke:0.12px #111;">THRESHOLD_B</div>
<div class="t" style="left:102.90px;top:19.91px;font-size:9.2px;color:#111;transform:scaleX(0.8274);transform-origin:0 0;-webkit-text-stroke:0.12px #111;">THPOS_B9</div>
<div class="t" style="left:221.80px;top:19.91px;font-size:9.2px;color:#111;transform:scaleX(0.8580);transform-origin:0 0;-webkit-text-stroke:0.12px #111;">Delta time to THPOS_B8</div>
<div class="ab" style="left:446.70px;top:15.80px;width:188.20px;height:15.4px;background:#fdfdfd;border:1px solid #e2e2e2;border-bottom:1px solid #c8c8c8;border-radius:1.5px;"></div>
<svg style="left:625.70px;top:21.90px" width="7" height="4" viewBox="0 0 7 4"><polyline points="0.4,0.4 3.5,3.4 6.6,0.4" fill="none" stroke="#666" stroke-width="0.9"/></svg>
<div class="t" style="left:449.00px;top:19.91px;font-size:9.2px;color:#111;transform:scaleX(0.8440);transform-origin:0 0;-webkit-text-stroke:0.12px #111;">4096 (4096 us)</div>
<div class="ab" style="left:635.70px;top:15.80px;width:188.20px;height:15.4px;background:#fdfdfd;border:1px solid #e2e2e2;border-bottom:1px solid #c8c8c8;border-radius:1.5px;"></div>
<svg style="left:814.70px;top:21.90px" width="7" height="4" viewBox="0 0 7 4"><polyline points="0.4,0.4 3.5,3.4 6.6,0.4" fill="none" stroke="#666" stroke-width="0.9"/></svg>
<div class="t" style="left:638.00px;top:19.91px;font-size:9.2px;color:#111;transform:scaleX(0.8440);transform-origin:0 0;-webkit-text-stroke:0.12px #111;">4096 (4096 us)</div>
<div class="t" style="left:2.70px;top:36.17px;font-size:9.2px;color:#111;transform:scaleX(0.8198);transform-origin:0 0;-webkit-text-stroke:0.12px #111;">64</div>
<div class="t" style="left:21.60px;top:36.17px;font-size:9.2px;color:#111;transform:scaleX(0.8252);transform-origin:0 0;-webkit-text-stroke:0.12px #111;">THRESHOLD_B</div>
<div class="t" style="left:102.90px;top:36.17px;font-size:9.2px;color:#111;transform:scaleX(0.8381);transform-origin:0 0;-webkit-text-stroke:0.12px #111;">THVAL_B10</div>
<div class="t" style="left:221.80px;top:36.17px;font-size:9.2px;color:#111;transform:scaleX(0.8816);transform-origin:0 0;-webkit-text-stroke:0.12px #111;">Threshold Value for A10</div>
<div class="ab" style="left:446.70px;top:32.06px;width:188.20px;height:15.4px;background:#fdfdfd;border:1px solid #e2e2e2;border-bottom:1px solid #c8c8c8;border-radius:1.5px;"></div>
<svg style="left:625.70px;top:38.16px" width="7" height="4" viewBox="0 0 7 4"><polyline points="0.4,0.4 3.5,3.4 6.6,0.4" fill="none" stroke="#666" stroke-width="0.9"/></svg>
<div class="t" style="left:449.00px;top:36.17px;font-size:9.2px;color:#111;transform:scaleX(0.8608);transform-origin:0 0;-webkit-text-stroke:0.12px #111;">0 (0  )</div>
<div class="ab" style="left:635.70px;top:32.06px;width:188.20px;height:15.4px;background:#fdfdfd;border:1px solid #e2e2e2;border-bottom:1px solid #c8c8c8;border-radius:1.5px;"></div>
<svg style="left:814.70px;top:38.16px" width="7" height="4" viewBox="0 0 7 4"><polyline points="0.4,0.4 3.5,3.4 6.6,0.4" fill="none" stroke="#666" stroke-width="0.9"/></svg>
<div class="t" style="left:638.00px;top:36.17px;font-size:9.2px;color:#111;transform:scaleX(0.8608);transform-origin:0 0;-webkit-text-stroke:0.12px #111;">0 (0  )</div>
<div class="t" style="left:2.70px;top:52.43px;font-size:9.2px;color:#111;transform:scaleX(0.8198);transform-origin:0 0;-webkit-text-stroke:0.12px #111;">65</div>
<div class="t" style="left:21.60px;top:52.43px;font-size:9.2px;color:#111;transform:scaleX(0.8252);transform-origin:0 0;-webkit-text-stroke:0.12px #111;">THRESHOLD_B</div>
<div class="t" style="left:102.90px;top:52.43px;font-size:9.2px;color:#111;transform:scaleX(0.8267);transform-origin:0 0;-webkit-text-stroke:0.12px #111;">THPOS_B10</div>
<div class="t" style="left:221.80px;top:52.43px;font-size:9.2px;color:#111;transform:scaleX(0.8580);transform-origin:0 0;-webkit-text-stroke:0.12px #111;">Delta time to THPOS_B9</div>
<div class="ab" style="left:446.70px;top:48.32px;width:188.20px;height:15.4px;background:#fdfdfd;border:1px solid #e2e2e2;border-bottom:1px solid #c8c8c8;border-radius:1.5px;"></div>
<svg style="left:625.70px;top:54.42px" width="7" height="4" viewBox="0 0 7 4"><polyline points="0.4,0.4 3.5,3.4 6.6,0.4" fill="none" stroke="#666" stroke-width="0.9"/></svg>
<div class="t" style="left:449.00px;top:52.43px;font-size:9.2px;color:#111;transform:scaleX(0.8440);transform-origin:0 0;-webkit-text-stroke:0.12px #111;">4096 (4096 us)</div>
<div class="ab" style="left:635.70px;top:48.32px;width:188.20px;height:15.4px;background:#fdfdfd;border:1px solid #e2e2e2;border-bottom:1px solid #c8c8c8;border-radius:1.5px;"></div>
<svg style="left:814.70px;top:54.42px" width="7" height="4" viewBox="0 0 7 4"><polyline points="0.4,0.4 3.5,3.4 6.6,0.4" fill="none" stroke="#666" stroke-width="0.9"/></svg>
<div class="t" style="left:638.00px;top:52.43px;font-size:9.2px;color:#111;transform:scaleX(0.8440);transform-origin:0 0;-webkit-text-stroke:0.12px #111;">4096 (4096 us)</div>
<div class="t" style="left:2.70px;top:68.69px;font-size:9.2px;color:#111;transform:scaleX(0.8198);transform-origin:0 0;-webkit-text-stroke:0.12px #111;">66</div>
<div class="t" style="left:21.60px;top:68.69px;font-size:9.2px;color:#111;transform:scaleX(0.8290);transform-origin:0 0;-webkit-text-stroke:0.12px #111;">CALIBRATION</div>
<div class="t" style="left:102.90px;top:68.69px;font-size:9.2px;color:#111;transform:scaleX(0.8261);transform-origin:0 0;-webkit-text-stroke:0.12px #111;">TSENS_TRIM</div>
<div class="t" style="left:221.80px;top:68.69px;font-size:9.2px;color:#111;transform:scaleX(0.8955);transform-origin:0 0;-webkit-text-stroke:0.12px #111;">Temperature sensor trimming</div>
<div class="ab" style="left:446.70px;top:64.58px;width:188.20px;height:15.4px;background:#fdfdfd;border:1px solid #e2e2e2;border-bottom:1px solid #c8c8c8;border-radius:1.5px;"></div>
<svg style="left:625.70px;top:70.68px" width="7" height="4" viewBox="0 0 7 4"><polyline points="0.4,0.4 3.5,3.4 6.6,0.4" fill="none" stroke="#666" stroke-width="0.9"/></svg>
<div class="t" style="left:449.00px;top:68.69px;font-size:9.2px;color:#111;transform:scaleX(0.8444);transform-origin:0 0;-webkit-text-stroke:0.12px #111;">-12 (-12 LSB )</div>
<div class="ab" style="left:635.70px;top:64.58px;width:188.20px;height:15.4px;background:#fdfdfd;border:1px solid #e2e2e2;border-bottom:1px solid #c8c8c8;border-radius:1.5px;"></div>
<svg style="left:814.70px;top:70.68px" width="7" height="4" viewBox="0 0 7 4"><polyline points="0.4,0.4 3.5,3.4 6.6,0.4" fill="none" stroke="#666" stroke-width="0.9"/></svg>
<div class="t" style="left:638.00px;top:68.69px;font-size:9.2px;color:#111;transform:scaleX(0.8444);transform-origin:0 0;-webkit-text-stroke:0.12px #111;">-12 (-12 LSB )</div>
<div class="t" style="left:2.70px;top:84.95px;font-size:9.2px;color:#111;transform:scaleX(0.8198);transform-origin:0 0;-webkit-text-stroke:0.12px #111;">67</div>
<div class="t" style="left:21.60px;top:84.95px;font-size:9.2px;color:#111;transform:scaleX(0.8290);transform-origin:0 0;-webkit-text-stroke:0.12px #111;">CALIBRATION</div>
<div class="t" style="left:102.90px;top:84.95px;font-size:9.2px;color:#111;transform:scaleX(0.8275);transform-origin:0 0;-webkit-text-stroke:0.12px #111;">OSC_TRIM</div>
<div class="t" style="left:221.80px;top:84.95px;font-size:9.2px;color:#111;transform:scaleX(0.8846);transform-origin:0 0;-webkit-text-stroke:0.12px #111;">Oscillator trimming</div>
<div class="ab" style="left:446.70px;top:80.84px;width:188.20px;height:15.4px;background:#fdfdfd;border:1px solid #e2e2e2;border-bottom:1px solid #c8c8c8;border-radius:1.5px;"></div>
<svg style="left:625.70px;top:86.94px" width="7" height="4" viewBox="0 0 7 4"><polyline points="0.4,0.4 3.5,3.4 6.6,0.4" fill="none" stroke="#666" stroke-width="0.9"/></svg>
<div class="t" style="left:449.00px;top:84.95px;font-size:9.2px;color:#111;transform:scaleX(0.8666);transform-origin:0 0;-webkit-text-stroke:0.12px #111;">0.0 (%)</div>
<div class="ab" style="left:635.70px;top:80.84px;width:188.20px;height:15.4px;background:#fdfdfd;border:1px solid #e2e2e2;border-bottom:1px solid #c8c8c8;border-radius:1.5px;"></div>
<svg style="left:814.70px;top:86.94px" width="7" height="4" viewBox="0 0 7 4"><polyline points="0.4,0.4 3.5,3.4 6.6,0.4" fill="none" stroke="#666" stroke-width="0.9"/></svg>
<div class="t" style="left:638.00px;top:84.95px;font-size:9.2px;color:#111;transform:scaleX(0.8666);transform-origin:0 0;-webkit-text-stroke:0.12px #111;">0.0 (%)</div>
<div class="t" style="left:2.70px;top:101.21px;font-size:9.2px;color:#111;transform:scaleX(0.8198);transform-origin:0 0;-webkit-text-stroke:0.12px #111;">68</div>
<div class="t" style="left:21.60px;top:101.21px;font-size:9.2px;color:#111;transform:scaleX(0.8290);transform-origin:0 0;-webkit-text-stroke:0.12px #111;">CALIBRATION</div>
<div class="t" style="left:102.90px;top:101.21px;font-size:9.2px;color:#111;transform:scaleX(0.8913);transform-origin:0 0;-webkit-text-stroke:0.12px #111;">reserved</div>
<div class="t" style="left:221.80px;top:101.21px;font-size:9.2px;color:#111;transform:scaleX(0.8913);transform-origin:0 0;-webkit-text-stroke:0.12px #111;">reserved</div>
<div class="t" style="left:449.00px;top:101.21px;font-size:9.2px;color:#111;transform:scaleX(0.8198);transform-origin:0 0;-webkit-text-stroke:0.12px #111;">0</div>
<div class="t" style="left:638.00px;top:101.21px;font-size:9.2px;color:#111;transform:scaleX(0.8198);transform-origin:0 0;-webkit-text-stroke:0.12px #111;">0</div>
<div class="t" style="left:2.70px;top:117.47px;font-size:9.2px;color:#111;transform:scaleX(0.8198);transform-origin:0 0;-webkit-text-stroke:0.12px #111;">69</div>
<div class="t" style="left:21.60px;top:117.47px;font-size:9.2px;color:#111;transform:scaleX(0.8290);transform-origin:0 0;-webkit-text-stroke:0.12px #111;">CALIBRATION</div>
<div class="t" style="left:102.90px;top:117.47px;font-size:9.2px;color:#111;transform:scaleX(0.8285);transform-origin:0 0;-webkit-text-stroke:0.12px #111;">NFD_WIN</div>
<div class="t" style="left:221.80px;top:117.47px;font-size:9.2px;color:#111;transform:scaleX(0.8816);transform-origin:0 0;-webkit-text-stroke:0.12px #111;">NFD energy accumulation window</div>
<div class="ab" style="left:446.70px;top:113.36px;width:188.20px;height:15.4px;background:#fdfdfd;border:1px solid #e2e2e2;border-bottom:1px solid #c8c8c8;border-radius:1.5px;"></div>
<svg style="left:625.70px;top:119.46px" width="7" height="4" viewBox="0 0 7 4"><polyline points="0.4,0.4 3.5,3.4 6.6,0.4" fill="none" stroke="#666" stroke-width="0.9"/></svg>
<div class="t" style="left:449.00px;top:117.47px;font-size:9.2px;color:#111;transform:scaleX(0.8631);transform-origin:0 0;-webkit-text-stroke:0.12px #111;">20 (20 Samples)</div>
<div class="ab" style="left:635.70px;top:113.36px;width:188.20px;height:15.4px;background:#fdfdfd;border:1px solid #e2e2e2;border-bottom:1px solid #c8c8c8;border-radius:1.5px;"></div>
<svg style="left:814.70px;top:119.46px" width="7" height="4" viewBox="0 0 7 4"><polyline points="0.4,0.4 3.5,3.4 6.6,0.4" fill="none" stroke="#666" stroke-width="0.9"/></svg>
<div class="t" style="left:638.00px;top:117.47px;font-size:9.2px;color:#111;transform:scaleX(0.8631);transform-origin:0 0;-webkit-text-stroke:0.12px #111;">20 (20 Samples)</div>
<div class="t" style="left:2.70px;top:133.73px;font-size:9.2px;color:#111;transform:scaleX(0.8198);transform-origin:0 0;-webkit-text-stroke:0.12px #111;">70</div>
<div class="t" style="left:21.60px;top:133.73px;font-size:9.2px;color:#111;transform:scaleX(0.8290);transform-origin:0 0;-webkit-text-stroke:0.12px #111;">CALIBRATION</div>
<div class="t" style="left:102.90px;top:133.73px;font-size:9.2px;color:#111;transform:scaleX(0.8264);transform-origin:0 0;-webkit-text-stroke:0.12px #111;">NFD_THRES</div>
<div class="t" style="left:221.80px;top:133.73px;font-size:9.2px;color:#111;transform:scaleX(0.8882);transform-origin:0 0;-webkit-text-stroke:0.12px #111;">Near-field detection energy threshold</div>
<div class="ab" style="left:446.70px;top:129.62px;width:188.20px;height:15.4px;background:#fdfdfd;border:1px solid #e2e2e2;border-bottom:1px solid #c8c8c8;border-radius:1.5px;"></div>
<svg style="left:625.70px;top:135.72px" width="7" height="4" viewBox="0 0 7 4"><polyline points="0.4,0.4 3.5,3.4 6.6,0.4" fill="none" stroke="#666" stroke-width="0.9"/></svg>
<div class="t" style="left:449.00px;top:133.73px;font-size:9.2px;color:#111;transform:scaleX(0.8460);transform-origin:0 0;-webkit-text-stroke:0.12px #111;">60 ( 60 *(1+NFD_WIN/3) )</div>
<div class="ab" style="left:635.70px;top:129.62px;width:188.20px;height:15.4px;background:#fdfdfd;border:1px solid #e2e2e2;border-bottom:1px solid #c8c8c8;border-radius:1.5px;"></div>
<svg style="left:814.70px;top:135.72px" width="7" height="4" viewBox="0 0 7 4"><polyline points="0.4,0.4 3.5,3.4 6.6,0.4" fill="none" stroke="#666" stroke-width="0.9"/></svg>
<div class="t" style="left:638.00px;top:133.73px;font-size:9.2px;color:#111;transform:scaleX(0.8460);transform-origin:0 0;-webkit-text-stroke:0.12px #111;">60 ( 60 *(1+NFD_WIN/3) )</div>
<div class="t" style="left:2.70px;top:149.99px;font-size:9.2px;color:#111;transform:scaleX(0.8198);transform-origin:0 0;-webkit-text-stroke:0.12px #111;">71</div>
<div class="t" style="left:21.60px;top:149.99px;font-size:9.2px;color:#111;transform:scaleX(0.8290);transform-origin:0 0;-webkit-text-stroke:0.12px #111;">CALIBRATION</div>
<div class="t" style="left:102.90px;top:149.99px;font-size:9.2px;color:#111;transform:scaleX(0.8303);transform-origin:0 0;-webkit-text-stroke:0.12px #111;">NFD_TOFF</div>
<div class="t" style="left:221.80px;top:149.99px;font-size:9.2px;color:#111;transform:scaleX(0.8826);transform-origin:0 0;-webkit-text-stroke:0.12px #111;">NFD off time before measurement</div>
<div class="ab" style="left:446.70px;top:145.88px;width:188.20px;height:15.4px;background:#fdfdfd;border:1px solid #e2e2e2;border-bottom:1px solid #c8c8c8;border-radius:1.5px;"></div>
<svg style="left:625.70px;top:151.98px" width="7" height="4" viewBox="0 0 7 4"><polyline points="0.4,0.4 3.5,3.4 6.6,0.4" fill="none" stroke="#666" stroke-width="0.9"/></svg>
<div class="t" style="left:449.00px;top:149.99px;font-size:9.2px;color:#111;transform:scaleX(0.8488);transform-origin:0 0;-webkit-text-stroke:0.12px #111;">500 (500 us)</div>
<div class="ab" style="left:635.70px;top:145.88px;width:188.20px;height:15.4px;background:#fdfdfd;border:1px solid #e2e2e2;border-bottom:1px solid #c8c8c8;border-radius:1.5px;"></div>
<svg style="left:814.70px;top:151.98px" width="7" height="4" viewBox="0 0 7 4"><polyline points="0.4,0.4 3.5,3.4 6.6,0.4" fill="none" stroke="#666" stroke-width="0.9"/></svg>
<div class="t" style="left:638.00px;top:149.99px;font-size:9.2px;color:#111;transform:scaleX(0.8488);transform-origin:0 0;-webkit-text-stroke:0.12px #111;">500 (500 us)</div>
<div class="t" style="left:2.70px;top:166.25px;font-size:9.2px;font-weight:bold;color:#111;transform:scaleX(0.8033);transform-origin:0 0;-webkit-text-stroke:0.12px #111;">72</div>
<div class="t" style="left:21.60px;top:166.25px;font-size:9.2px;color:#111;transform:scaleX(0.8290);transform-origin:0 0;-webkit-text-stroke:0.12px #111;">CALIBRATION</div>
<div class="t" style="left:102.90px;top:166.25px;font-size:9.2px;color:#111;transform:scaleX(0.8326);transform-origin:0 0;-webkit-text-stroke:0.12px #111;">G_DIG</div>
<div class="t" style="left:221.80px;top:166.25px;font-size:9.2px;color:#111;transform:scaleX(0.8871);transform-origin:0 0;-webkit-text-stroke:0.12px #111;">Digital amplifier gain setting</div>
<div class="ab" style="left:446.70px;top:162.14px;width:188.20px;height:15.4px;background:#e5f3fb;border:1px solid #e2e2e2;border-bottom:1px solid #c8c8c8;border-radius:1.5px;border-left:1px solid #1c7fd6;"></div>
<svg style="left:625.70px;top:168.24px" width="7" height="4" viewBox="0 0 7 4"><polyline points="0.4,0.4 3.5,3.4 6.6,0.4" fill="none" stroke="#666" stroke-width="0.9"/></svg>
<div class="t" style="left:449.00px;top:166.25px;font-size:9.2px;color:#111;transform:scaleX(0.8305);transform-origin:0 0;-webkit-text-stroke:0.12px #111;">0.2961904761904762 (dB)</div>
<div class="ab" style="left:635.70px;top:162.14px;width:188.20px;height:15.4px;background:#fdfdfd;border:1px solid #e2e2e2;border-bottom:1px solid #c8c8c8;border-radius:1.5px;"></div>
<svg style="left:814.70px;top:168.24px" width="7" height="4" viewBox="0 0 7 4"><polyline points="0.4,0.4 3.5,3.4 6.6,0.4" fill="none" stroke="#666" stroke-width="0.9"/></svg>
<div class="t" style="left:638.00px;top:166.25px;font-size:9.2px;color:#111;transform:scaleX(0.8300);transform-origin:0 0;-webkit-text-stroke:0.12px #111;">0.31714285714285717 (dB)</div>
<div class="t" style="left:2.70px;top:182.51px;font-size:9.2px;color:#111;transform:scaleX(0.8198);transform-origin:0 0;-webkit-text-stroke:0.12px #111;">73</div>
<div class="t" style="left:21.60px;top:182.51px;font-size:9.2px;color:#111;transform:scaleX(0.8290);transform-origin:0 0;-webkit-text-stroke:0.12px #111;">CALIBRATION</div>
<div class="t" style="left:102.90px;top:182.51px;font-size:9.2px;color:#111;transform:scaleX(0.8315);transform-origin:0 0;-webkit-text-stroke:0.12px #111;">G_ANA</div>
<div class="t" style="left:221.80px;top:182.51px;font-size:9.2px;color:#111;transform:scaleX(0.8875);transform-origin:0 0;-webkit-text-stroke:0.12px #111;">Analog amplifier gain setting</div>
<div class="ab" style="left:446.70px;top:178.40px;width:188.20px;height:15.4px;background:#fdfdfd;border:1px solid #e2e2e2;border-bottom:1px solid #c8c8c8;border-radius:1.5px;"></div>
<svg style="left:625.70px;top:184.50px" width="7" height="4" viewBox="0 0 7 4"><polyline points="0.4,0.4 3.5,3.4 6.6,0.4" fill="none" stroke="#666" stroke-width="0.9"/></svg>
<div class="t" style="left:449.00px;top:182.51px;font-size:9.2px;color:#111;transform:scaleX(0.8461);transform-origin:0 0;-webkit-text-stroke:0.12px #111;">44.0 (44.0 dB)</div>
<div class="ab" style="left:635.70px;top:178.40px;width:188.20px;height:15.4px;background:#fdfdfd;border:1px solid #e2e2e2;border-bottom:1px solid #c8c8c8;border-radius:1.5px;"></div>
<svg style="left:814.70px;top:184.50px" width="7" height="4" viewBox="0 0 7 4"><polyline points="0.4,0.4 3.5,3.4 6.6,0.4" fill="none" stroke="#666" stroke-width="0.9"/></svg>
<div class="t" style="left:638.00px;top:182.51px;font-size:9.2px;color:#111;transform:scaleX(0.8461);transform-origin:0 0;-webkit-text-stroke:0.12px #111;">44.0 (44.0 dB)</div>
<div class="t" style="left:2.70px;top:198.77px;font-size:9.2px;color:#111;transform:scaleX(0.8198);transform-origin:0 0;-webkit-text-stroke:0.12px #111;">74</div>
<div class="t" style="left:21.60px;top:198.77px;font-size:9.2px;color:#111;transform:scaleX(0.8290);transform-origin:0 0;-webkit-text-stroke:0.12px #111;">CALIBRATION</div>
<div class="t" style="left:102.90px;top:198.77px;font-size:9.2px;color:#111;transform:scaleX(0.8362);transform-origin:0 0;-webkit-text-stroke:0.12px #111;">V_DRV</div>
<div class="t" style="left:221.80px;top:198.77px;font-size:9.2px;color:#111;transform:scaleX(0.8906);transform-origin:0 0;-webkit-text-stroke:0.12px #111;">Transducer driver voltage setting</div>
<div class="ab" style="left:446.70px;top:194.66px;width:188.20px;height:15.4px;background:#fdfdfd;border:1px solid #e2e2e2;border-bottom:1px solid #c8c8c8;border-radius:1.5px;"></div>
<svg style="left:625.70px;top:200.76px" width="7" height="4" viewBox="0 0 7 4"><polyline points="0.4,0.4 3.5,3.4 6.6,0.4" fill="none" stroke="#666" stroke-width="0.9"/></svg>
<div class="t" style="left:449.00px;top:198.77px;font-size:9.2px;color:#111;transform:scaleX(0.8418);transform-origin:0 0;-webkit-text-stroke:0.12px #111;">22.1 (22.1 V)</div>
<div class="ab" style="left:635.70px;top:194.66px;width:188.20px;height:15.4px;background:#fdfdfd;border:1px solid #e2e2e2;border-bottom:1px solid #c8c8c8;border-radius:1.5px;"></div>
<svg style="left:814.70px;top:200.76px" width="7" height="4" viewBox="0 0 7 4"><polyline points="0.4,0.4 3.5,3.4 6.6,0.4" fill="none" stroke="#666" stroke-width="0.9"/></svg>
<div class="t" style="left:638.00px;top:198.77px;font-size:9.2px;color:#111;transform:scaleX(0.8418);transform-origin:0 0;-webkit-text-stroke:0.12px #111;">24.8 (24.8 V)</div>
<div class="t" style="left:2.70px;top:215.03px;font-size:9.2px;color:#111;transform:scaleX(0.8198);transform-origin:0 0;-webkit-text-stroke:0.12px #111;">75</div>
<div class="t" style="left:21.60px;top:215.03px;font-size:9.2px;color:#111;transform:scaleX(0.8290);transform-origin:0 0;-webkit-text-stroke:0.12px #111;">CALIBRATION</div>
<div class="t" style="left:102.90px;top:215.03px;font-size:9.2px;color:#111;transform:scaleX(0.8365);transform-origin:0 0;-webkit-text-stroke:0.12px #111;">F_DRV</div>
<div class="t" style="left:221.80px;top:215.03px;font-size:9.2px;color:#111;transform:scaleX(0.8620);transform-origin:0 0;-webkit-text-stroke:0.12px #111;">Burst frequency F_DRV=(12000/freq)-144</div>
<div class="ab" style="left:446.70px;top:210.92px;width:188.20px;height:15.4px;background:#fdfdfd;border:1px solid #e2e2e2;border-bottom:1px solid #c8c8c8;border-radius:1.5px;"></div>
<svg style="left:625.70px;top:217.02px" width="7" height="4" viewBox="0 0 7 4"><polyline points="0.4,0.4 3.5,3.4 6.6,0.4" fill="none" stroke="#666" stroke-width="0.9"/></svg>
<div class="t" style="left:449.00px;top:215.03px;font-size:9.2px;color:#111;transform:scaleX(0.8392);transform-origin:0 0;-webkit-text-stroke:0.12px #111;">74542.75 (Hz)</div>
<div class="ab" style="left:635.70px;top:210.92px;width:188.20px;height:15.4px;background:#fdfdfd;border:1px solid #e2e2e2;border-bottom:1px solid #c8c8c8;border-radius:1.5px;"></div>
<svg style="left:814.70px;top:217.02px" width="7" height="4" viewBox="0 0 7 4"><polyline points="0.4,0.4 3.5,3.4 6.6,0.4" fill="none" stroke="#666" stroke-width="0.9"/></svg>
<div class="t" style="left:638.00px;top:215.03px;font-size:9.2px;color:#111;transform:scaleX(0.8392);transform-origin:0 0;-webkit-text-stroke:0.12px #111;">74542.75 (Hz)</div>
<div class="t" style="left:2.70px;top:231.29px;font-size:9.2px;color:#111;transform:scaleX(0.8198);transform-origin:0 0;-webkit-text-stroke:0.12px #111;">76</div>
<div class="t" style="left:21.60px;top:231.29px;font-size:9.2px;color:#111;transform:scaleX(0.8290);transform-origin:0 0;-webkit-text-stroke:0.12px #111;">CALIBRATION</div>
<div class="t" style="left:102.90px;top:231.29px;font-size:9.2px;color:#111;transform:scaleX(0.8295);transform-origin:0 0;-webkit-text-stroke:0.12px #111;">S_DAMP</div>
<div class="t" style="left:221.80px;top:231.29px;font-size:9.2px;color:#111;transform:scaleX(0.8865);transform-origin:0 0;-webkit-text-stroke:0.12px #111;">Smart damping setting</div>
<div class="t" style="left:449.00px;top:231.29px;font-size:9.2px;color:#111;transform:scaleX(0.8784);transform-origin:0 0;-webkit-text-stroke:0.12px #111;">11</div>
<div class="t" style="left:638.00px;top:231.29px;font-size:9.2px;color:#111;transform:scaleX(0.8198);transform-origin:0 0;-webkit-text-stroke:0.12px #111;">10</div>
<div class="t" style="left:2.70px;top:247.55px;font-size:9.2px;color:#111;transform:scaleX(0.8198);transform-origin:0 0;-webkit-text-stroke:0.12px #111;">77</div>
<div class="t" style="left:21.60px;top:247.55px;font-size:9.2px;color:#111;transform:scaleX(0.8290);transform-origin:0 0;-webkit-text-stroke:0.12px #111;">CALIBRATION</div>
<div class="t" style="left:102.90px;top:247.55px;font-size:9.2px;color:#111;transform:scaleX(0.8262);transform-origin:0 0;-webkit-text-stroke:0.12px #111;">CUSTOMER_BITS</div>
<div class="t" style="left:221.80px;top:247.55px;font-size:9.2px;color:#111;transform:scaleX(0.8547);transform-origin:0 0;-webkit-text-stroke:0.12px #111;">CUSTOMER BITS Free configurable</div>
<div class="t" style="left:449.00px;top:247.55px;font-size:9.2px;color:#111;transform:scaleX(0.8198);transform-origin:0 0;-webkit-text-stroke:0.12px #111;">0</div>
<div class="t" style="left:638.00px;top:247.55px;font-size:9.2px;color:#111;transform:scaleX(0.8198);transform-origin:0 0;-webkit-text-stroke:0.12px #111;">0</div>
<div class="t" style="left:2.70px;top:263.81px;font-size:9.2px;color:#111;transform:scaleX(0.8198);transform-origin:0 0;-webkit-text-stroke:0.12px #111;">78</div>
<div class="t" style="left:21.60px;top:263.81px;font-size:9.2px;color:#111;transform:scaleX(0.8198);transform-origin:0 0;-webkit-text-stroke:0.12px #111;">MEASUREMENT</div>
<div class="t" style="left:102.90px;top:263.81px;font-size:9.2px;color:#111;transform:scaleX(0.8274);transform-origin:0 0;-webkit-text-stroke:0.12px #111;">NPULSE_A</div>
<div class="t" style="left:221.80px;top:263.81px;font-size:9.2px;color:#111;transform:scaleX(0.8848);transform-origin:0 0;-webkit-text-stroke:0.12px #111;">Number of burst pulses - Profile A</div>
<div class="ab" style="left:446.70px;top:259.70px;width:188.20px;height:15.4px;background:#fdfdfd;border:1px solid #e2e2e2;border-bottom:1px solid #c8c8c8;border-radius:1.5px;"></div>
<svg style="left:625.70px;top:265.80px" width="7" height="4" viewBox="0 0 7 4"><polyline points="0.4,0.4 3.5,3.4 6.6,0.4" fill="none" stroke="#666" stroke-width="0.9"/></svg>
<div class="t" style="left:449.00px;top:263.81px;font-size:9.2px;color:#111;transform:scaleX(0.8662);transform-origin:0 0;-webkit-text-stroke:0.12px #111;">16 (16 pulses)</div>
<div class="ab" style="left:635.70px;top:259.70px;width:188.20px;height:15.4px;background:#fdfdfd;border:1px solid #e2e2e2;border-bottom:1px solid #c8c8c8;border-radius:1.5px;"></div>
<svg style="left:814.70px;top:265.80px" width="7" height="4" viewBox="0 0 7 4"><polyline points="0.4,0.4 3.5,3.4 6.6,0.4" fill="none" stroke="#666" stroke-width="0.9"/></svg>
<div class="t" style="left:638.00px;top:263.81px;font-size:9.2px;color:#111;transform:scaleX(0.8662);transform-origin:0 0;-webkit-text-stroke:0.12px #111;">16 (16 pulses)</div>
<div class="t" style="left:2.70px;top:280.07px;font-size:9.2px;color:#111;transform:scaleX(0.8198);transform-origin:0 0;-webkit-text-stroke:0.12px #111;">79</div>
<div class="t" style="left:21.60px;top:280.07px;font-size:9.2px;color:#111;transform:scaleX(0.8198);transform-origin:0 0;-webkit-text-stroke:0.12px #111;">MEASUREMENT</div>
<div class="t" style="left:102.90px;top:280.07px;font-size:9.2px;color:#111;transform:scaleX(0.8283);transform-origin:0 0;-webkit-text-stroke:0.12px #111;">TMEAS_A</div>
<div class="t" style="left:221.80px;top:280.07px;font-size:9.2px;color:#111;transform:scaleX(0.8831);transform-origin:0 0;-webkit-text-stroke:0.12px #111;">Measurement time - Profile A</div>
<div class="ab" style="left:446.70px;top:275.96px;width:188.20px;height:15.4px;background:#fdfdfd;border:1px solid #e2e2e2;border-bottom:1px solid #c8c8c8;border-radius:1.5px;"></div>
<svg style="left:625.70px;top:282.06px" width="7" height="4" viewBox="0 0 7 4"><polyline points="0.4,0.4 3.5,3.4 6.6,0.4" fill="none" stroke="#666" stroke-width="0.9"/></svg>
<div class="t" style="left:449.00px;top:280.07px;font-size:9.2px;color:#111;transform:scaleX(0.8492);transform-origin:0 0;-webkit-text-stroke:0.12px #111;">14.58 (14.58 ms)</div>
<div class="ab" style="left:635.70px;top:275.96px;width:188.20px;height:15.4px;background:#fdfdfd;border:1px solid #e2e2e2;border-bottom:1px solid #c8c8c8;border-radius:1.5px;"></div>
<svg style="left:814.70px;top:282.06px" width="7" height="4" viewBox="0 0 7 4"><polyline points="0.4,0.4 3.5,3.4 6.6,0.4" fill="none" stroke="#666" stroke-width="0.9"/></svg>
<div class="t" style="left:638.00px;top:280.07px;font-size:9.2px;color:#111;transform:scaleX(0.8492);transform-origin:0 0;-webkit-text-stroke:0.12px #111;">14.58 (14.58 ms)</div>
<div class="t" style="left:2.70px;top:296.33px;font-size:9.2px;color:#111;transform:scaleX(0.8198);transform-origin:0 0;-webkit-text-stroke:0.12px #111;">80</div>
<div class="t" style="left:21.60px;top:296.33px;font-size:9.2px;color:#111;transform:scaleX(0.8198);transform-origin:0 0;-webkit-text-stroke:0.12px #111;">MEASUREMENT</div>
<div class="t" style="left:102.90px;top:296.33px;font-size:9.2px;color:#111;transform:scaleX(0.8305);transform-origin:0 0;-webkit-text-stroke:0.12px #111;">TSEL_A</div>
<div class="t" style="left:221.80px;top:296.33px;font-size:9.2px;color:#111;transform:scaleX(0.8845);transform-origin:0 0;-webkit-text-stroke:0.12px #111;">Threshold selection - Profile A</div>
<div class="ab" style="left:446.70px;top:292.22px;width:188.20px;height:15.4px;background:#fdfdfd;border:1px solid #e2e2e2;border-bottom:1px solid #c8c8c8;border-radius:1.5px;"></div>
<svg style="left:625.70px;top:298.32px" width="7" height="4" viewBox="0 0 7 4"><polyline points="0.4,0.4 3.5,3.4 6.6,0.4" fill="none" stroke="#666" stroke-width="0.9"/></svg>
<div class="t" style="left:449.00px;top:296.33px;font-size:9.2px;color:#111;transform:scaleX(0.8793);transform-origin:0 0;-webkit-text-stroke:0.12px #111;">0 (Threshold A)</div>
<div class="ab" style="left:635.70px;top:292.22px;width:188.20px;height:15.4px;background:#fdfdfd;border:1px solid #e2e2e2;border-bottom:1px solid #c8c8c8;border-radius:1.5px;"></div>
<svg style="left:814.70px;top:298.32px" width="7" height="4" viewBox="0 0 7 4"><polyline points="0.4,0.4 3.5,3.4 6.6,0.4" fill="none" stroke="#666" stroke-width="0.9"/></svg>
<div class="t" style="left:638.00px;top:296.33px;font-size:9.2px;color:#111;transform:scaleX(0.8793);transform-origin:0 0;-webkit-text-stroke:0.12px #111;">0 (Threshold A)</div>
<div class="t" style="left:2.70px;top:312.59px;font-size:9.2px;color:#111;transform:scaleX(0.8198);transform-origin:0 0;-webkit-text-stroke:0.12px #111;">81</div>
<div class="t" style="left:21.60px;top:312.59px;font-size:9.2px;color:#111;transform:scaleX(0.8198);transform-origin:0 0;-webkit-text-stroke:0.12px #111;">MEASUREMENT</div>
<div class="t" style="left:102.90px;top:312.59px;font-size:9.2px;color:#111;transform:scaleX(0.8274);transform-origin:0 0;-webkit-text-stroke:0.12px #111;">NPULSE_B</div>
<div class="t" style="left:221.80px;top:312.59px;font-size:9.2px;color:#111;transform:scaleX(0.8815);transform-origin:0 0;-webkit-text-stroke:0.12px #111;">Number of burst pulses - Profile B</div>
<div class="ab" style="left:446.70px;top:308.48px;width:188.20px;height:15.4px;background:#fdfdfd;border:1px solid #e2e2e2;border-bottom:1px solid #c8c8c8;border-radius:1.5px;"></div>
<svg style="left:625.70px;top:314.58px" width="7" height="4" viewBox="0 0 7 4"><polyline points="0.4,0.4 3.5,3.4 6.6,0.4" fill="none" stroke="#666" stroke-width="0.9"/></svg>
<div class="t" style="left:449.00px;top:312.59px;font-size:9.2px;color:#111;transform:scaleX(0.8768);transform-origin:0 0;-webkit-text-stroke:0.12px #111;">8 (8  pulses)</div>
<div class="ab" style="left:635.70px;top:308.48px;width:188.20px;height:15.4px;background:#fdfdfd;border:1px solid #e2e2e2;border-bottom:1px solid #c8c8c8;border-radius:1.5px;"></div>
<svg style="left:814.70px;top:314.58px" width="7" height="4" viewBox="0 0 7 4"><polyline points="0.4,0.4 3.5,3.4 6.6,0.4" fill="none" stroke="#666" stroke-width="0.9"/></svg>
<div class="t" style="left:638.00px;top:312.59px;font-size:9.2px;color:#111;transform:scaleX(0.8768);transform-origin:0 0;-webkit-text-stroke:0.12px #111;">8 (8  pulses)</div>
<div class="t" style="left:2.70px;top:328.85px;font-size:9.2px;color:#111;transform:scaleX(0.8198);transform-origin:0 0;-webkit-text-stroke:0.12px #111;">82</div>
<div class="t" style="left:21.60px;top:328.85px;font-size:9.2px;color:#111;transform:scaleX(0.8198);transform-origin:0 0;-webkit-text-stroke:0.12px #111;">MEASUREMENT</div>
<div class="t" style="left:102.90px;top:328.85px;font-size:9.2px;color:#111;transform:scaleX(0.8283);transform-origin:0 0;-webkit-text-stroke:0.12px #111;">TMEAS_B</div>
<div class="t" style="left:221.80px;top:328.85px;font-size:9.2px;color:#111;transform:scaleX(0.8793);transform-origin:0 0;-webkit-text-stroke:0.12px #111;">Measurement time - Profile B</div>
<div class="ab" style="left:446.70px;top:324.74px;width:188.20px;height:15.4px;background:#fdfdfd;border:1px solid #e2e2e2;border-bottom:1px solid #c8c8c8;border-radius:1.5px;"></div>
<svg style="left:625.70px;top:330.84px" width="7" height="4" viewBox="0 0 7 4"><polyline points="0.4,0.4 3.5,3.4 6.6,0.4" fill="none" stroke="#666" stroke-width="0.9"/></svg>
<div class="t" style="left:449.00px;top:328.85px;font-size:9.2px;color:#111;transform:scaleX(0.8572);transform-origin:0 0;-webkit-text-stroke:0.12px #111;"> 8.75 ( 8.75 ms)</div>
<div class="ab" style="left:635.70px;top:324.74px;width:188.20px;height:15.4px;background:#fdfdfd;border:1px solid #e2e2e2;border-bottom:1px solid #c8c8c8;border-radius:1.5px;"></div>
<svg style="left:814.70px;top:330.84px" width="7" height="4" viewBox="0 0 7 4"><polyline points="0.4,0.4 3.5,3.4 6.6,0.4" fill="none" stroke="#666" stroke-width="0.9"/></svg>
<div class="t" style="left:638.00px;top:328.85px;font-size:9.2px;color:#111;transform:scaleX(0.8572);transform-origin:0 0;-webkit-text-stroke:0.12px #111;"> 8.75 ( 8.75 ms)</div>
<div class="t" style="left:2.70px;top:345.11px;font-size:9.2px;color:#111;transform:scaleX(0.8198);transform-origin:0 0;-webkit-text-stroke:0.12px #111;">83</div>
<div class="t" style="left:21.60px;top:345.11px;font-size:9.2px;color:#111;transform:scaleX(0.8198);transform-origin:0 0;-webkit-text-stroke:0.12px #111;">MEASUREMENT</div>
<div class="t" style="left:102.90px;top:345.11px;font-size:9.2px;color:#111;transform:scaleX(0.8305);transform-origin:0 0;-webkit-text-stroke:0.12px #111;">TSEL_B</div>
<div class="t" style="left:221.80px;top:345.11px;font-size:9.2px;color:#111;transform:scaleX(0.8809);transform-origin:0 0;-webkit-text-stroke:0.12px #111;">Threshold selection - Profile B</div>
<div class="ab" style="left:446.70px;top:341.00px;width:188.20px;height:15.4px;background:#fdfdfd;border:1px solid #e2e2e2;border-bottom:1px solid #c8c8c8;border-radius:1.5px;"></div>
<svg style="left:625.70px;top:347.10px" width="7" height="4" viewBox="0 0 7 4"><polyline points="0.4,0.4 3.5,3.4 6.6,0.4" fill="none" stroke="#666" stroke-width="0.9"/></svg>
<div class="t" style="left:449.00px;top:345.11px;font-size:9.2px;color:#111;transform:scaleX(0.8793);transform-origin:0 0;-webkit-text-stroke:0.12px #111;">0 (Threshold A)</div>
<div class="ab" style="left:635.70px;top:341.00px;width:188.20px;height:15.4px;background:#fdfdfd;border:1px solid #e2e2e2;border-bottom:1px solid #c8c8c8;border-radius:1.5px;"></div>
<svg style="left:814.70px;top:347.10px" width="7" height="4" viewBox="0 0 7 4"><polyline points="0.4,0.4 3.5,3.4 6.6,0.4" fill="none" stroke="#666" stroke-width="0.9"/></svg>
<div class="t" style="left:638.00px;top:345.11px;font-size:9.2px;color:#111;transform:scaleX(0.8793);transform-origin:0 0;-webkit-text-stroke:0.12px #111;">0 (Threshold A)</div>
</div>
<div class="t" style="left:204.00px;top:511.35px;font-size:8.8px;color:#111;transform:scaleX(0.9180);transform-origin:0 0;-webkit-text-stroke:0.12px #111;">steps to change register field: 1. Double on the field (in sensor column) to view options</div>
<div class="t" style="left:521.50px;top:511.35px;font-size:8.8px;color:#111;transform:scaleX(0.9187);transform-origin:0 0;-webkit-text-stroke:0.12px #111;">2. Click to select</div>
<div class="t" style="left:587.20px;top:511.35px;font-size:8.8px;color:#111;transform:scaleX(0.9201);transform-origin:0 0;-webkit-text-stroke:0.12px #111;">3. Click Write button to apply</div>
<div class="ab" style="left:197.9px;top:315.7px;width:841.1px;height:23.30000000000001px;border:5px solid #e4252b"></div>
<div class="ab" style="left:197.9px;top:349.0px;width:842.1px;height:19.899999999999977px;border:5px solid #e4252b"></div>
<div class="ab" style="left:197.9px;top:380.7px;width:844.1px;height:21.69999999999999px;border:5px solid #e4252b"></div>
<div class="ab" style="left:0;top:0;width:2px;height:662px;background:#1b1b1b"></div>
</body></html>
